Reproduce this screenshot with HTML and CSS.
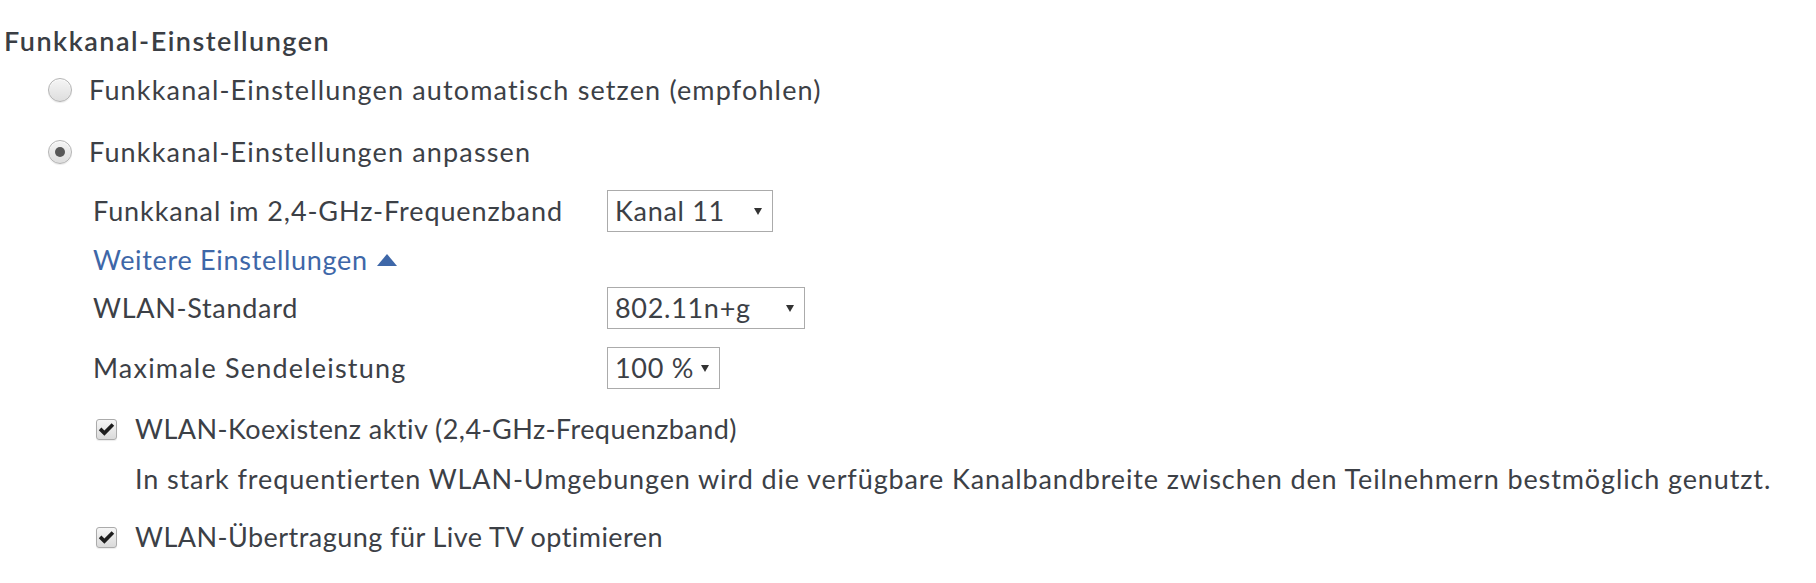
FILE: index.html
```html
<!DOCTYPE html>
<html lang="de">
<head>
<meta charset="utf-8">
<title>Funkkanal-Einstellungen</title>
<link rel="stylesheet" href="styles.css">
</head>
<body>
<div class="page">
  <h2 class="heading">Funkkanal-Einstellungen</h2>

  <div class="option option-auto">
    <span class="radio"></span>
    <span class="option-label">Funkkanal-Einstellungen automatisch setzen (empfohlen)</span>
  </div>

  <div class="option option-custom">
    <span class="radio radio-checked"></span>
    <span class="option-label">Funkkanal-Einstellungen anpassen</span>
  </div>

  <div class="settings">
    <div class="field field-channel">
      <span class="field-label label-channel">Funkkanal im 2,4-GHz-Frequenzband</span>
      <div class="select select-channel"><span class="select-value">Kanal 11</span><span class="select-arrow"></span></div>
    </div>

    <a class="more" href="#">Weitere Einstellungen<svg class="more-icon" width="20" height="12" viewBox="0 0 20 12"><polygon points="10,0 20,12 0,12"/></svg></a>

    <div class="field field-standard">
      <span class="field-label">WLAN-Standard</span>
      <div class="select select-standard"><span class="select-value">802.11n+g</span><span class="select-arrow"></span></div>
    </div>

    <div class="field field-power">
      <span class="field-label label-power">Maximale Sendeleistung</span>
      <div class="select select-power"><span class="select-value">100 %</span><span class="select-arrow"></span></div>
    </div>

    <div class="check check-coex">
      <span class="checkbox"><svg width="17" height="15" viewBox="0 0 17 15"><path d="M0.8 8.2 L3.4 5.6 L6.4 8.6 L13.6 1.2 L16.2 3.8 L6.4 13.8 Z"/></svg></span>
      <span class="check-label">WLAN-Koexistenz aktiv (2,4-GHz-Frequenzband)</span>
    </div>
    <p class="description">In stark frequentierten WLAN-Umgebungen wird die verfügbare Kanalbandbreite zwischen den Teilnehmern bestmöglich genutzt.</p>

    <div class="check check-tv">
      <span class="checkbox"><svg width="17" height="15" viewBox="0 0 17 15"><path d="M0.8 8.2 L3.4 5.6 L6.4 8.6 L13.6 1.2 L16.2 3.8 L6.4 13.8 Z"/></svg></span>
      <span class="check-label">WLAN-Übertragung für Live TV optimieren</span>
    </div>
  </div>
</div>
</body>
</html>
```
FILE: styles.css
```css
html, body {
  margin: 0;
  padding: 0;
  background: #ffffff;
}

body {
  font-family: Lato, "Liberation Sans", sans-serif;
  font-size: 27px;
  letter-spacing: 0.7px;
  color: #3c4046;
}

.page {
  padding: 21px 0 0 4px;
  display: flex;
  flex-direction: column;
  align-items: flex-start;
  white-space: nowrap;
}

.heading {
  margin: 0;
  height: 40px;
  line-height: 40px;
  font-size: 27px;
  font-weight: 600;
  letter-spacing: 1.5px;
  color: #3a3e44;
}

/* radio options */
.option {
  display: flex;
  align-items: center;
  height: 40px;
  margin-left: 44px;
}
.option-auto { margin-top: 9px; }
.option-custom { margin-top: 22px; }

.radio {
  box-sizing: border-box;
  width: 24px;
  height: 24px;
  border-radius: 50%;
  border: 1px solid #b4b4b4;
  background: linear-gradient(#f5f5f5, #dedede);
  box-shadow: inset 0 1px 1px rgba(255,255,255,0.8), 0 1px 1px rgba(0,0,0,0.08);
  display: flex;
  align-items: center;
  justify-content: center;
  flex: none;
}
.radio-checked::after {
  content: "";
  width: 10px;
  height: 10px;
  border-radius: 50%;
  background: #585858;
}

.option-label {
  margin-left: 17px;
  line-height: 40px;
  letter-spacing: 1.15px;
}

/* settings block */
.settings {
  margin-left: 89px;
  display: flex;
  flex-direction: column;
  align-items: flex-start;
}

.field {
  display: flex;
  align-items: center;
  height: 42px;
}
.field-channel { margin-top: 18px; }
.field-standard { margin-top: 7px; }
.field-power { margin-top: 18px; }

.field-label {
  width: 514px;
  flex: none;
  line-height: 42px;
}
.label-channel { letter-spacing: 0.9px; }
.label-power { letter-spacing: 1.2px; }

.select {
  box-sizing: border-box;
  height: 42px;
  border: 1px solid #ababab;
  background: #ffffff;
  display: flex;
  align-items: center;
  padding: 0 10px 0 7px;
  color: #3c4046;
}
.select-channel { width: 166px; }
.select-standard { width: 198px; }
.select-power { width: 113px; }

.select-value { line-height: 40px; }

.select-arrow {
  margin-left: auto;
  width: 0;
  height: 0;
  border-left: 4px solid transparent;
  border-right: 4px solid transparent;
  border-top: 7px solid #333333;
}

.more {
  margin-top: 8px;
  height: 40px;
  line-height: 40px;
  display: flex;
  align-items: center;
  color: #3e67a8;
  text-decoration: none;
}
.more-icon {
  margin-left: 9px;
  fill: #3e67a8;
  flex: none;
}

/* checkboxes */
.check {
  display: flex;
  align-items: center;
  height: 40px;
  margin-left: 3px;
}
.check-coex { margin-top: 20px; }
.check-tv { margin-top: 18px; }

.checkbox {
  box-sizing: border-box;
  width: 21px;
  height: 21px;
  border: 1px solid #ababab;
  border-radius: 3px;
  background: linear-gradient(#f6f6f6, #dadada);
  box-shadow: 0 1px 1px rgba(0,0,0,0.08);
  display: flex;
  align-items: center;
  justify-content: center;
  flex: none;
}
.checkbox svg { fill: #1e1e1e; }

.check-label {
  margin-left: 18px;
  line-height: 40px;
  letter-spacing: 0.45px;
}

.description {
  margin: 10px 0 0 42px;
  height: 40px;
  line-height: 40px;
  letter-spacing: 0.88px;
}
```
